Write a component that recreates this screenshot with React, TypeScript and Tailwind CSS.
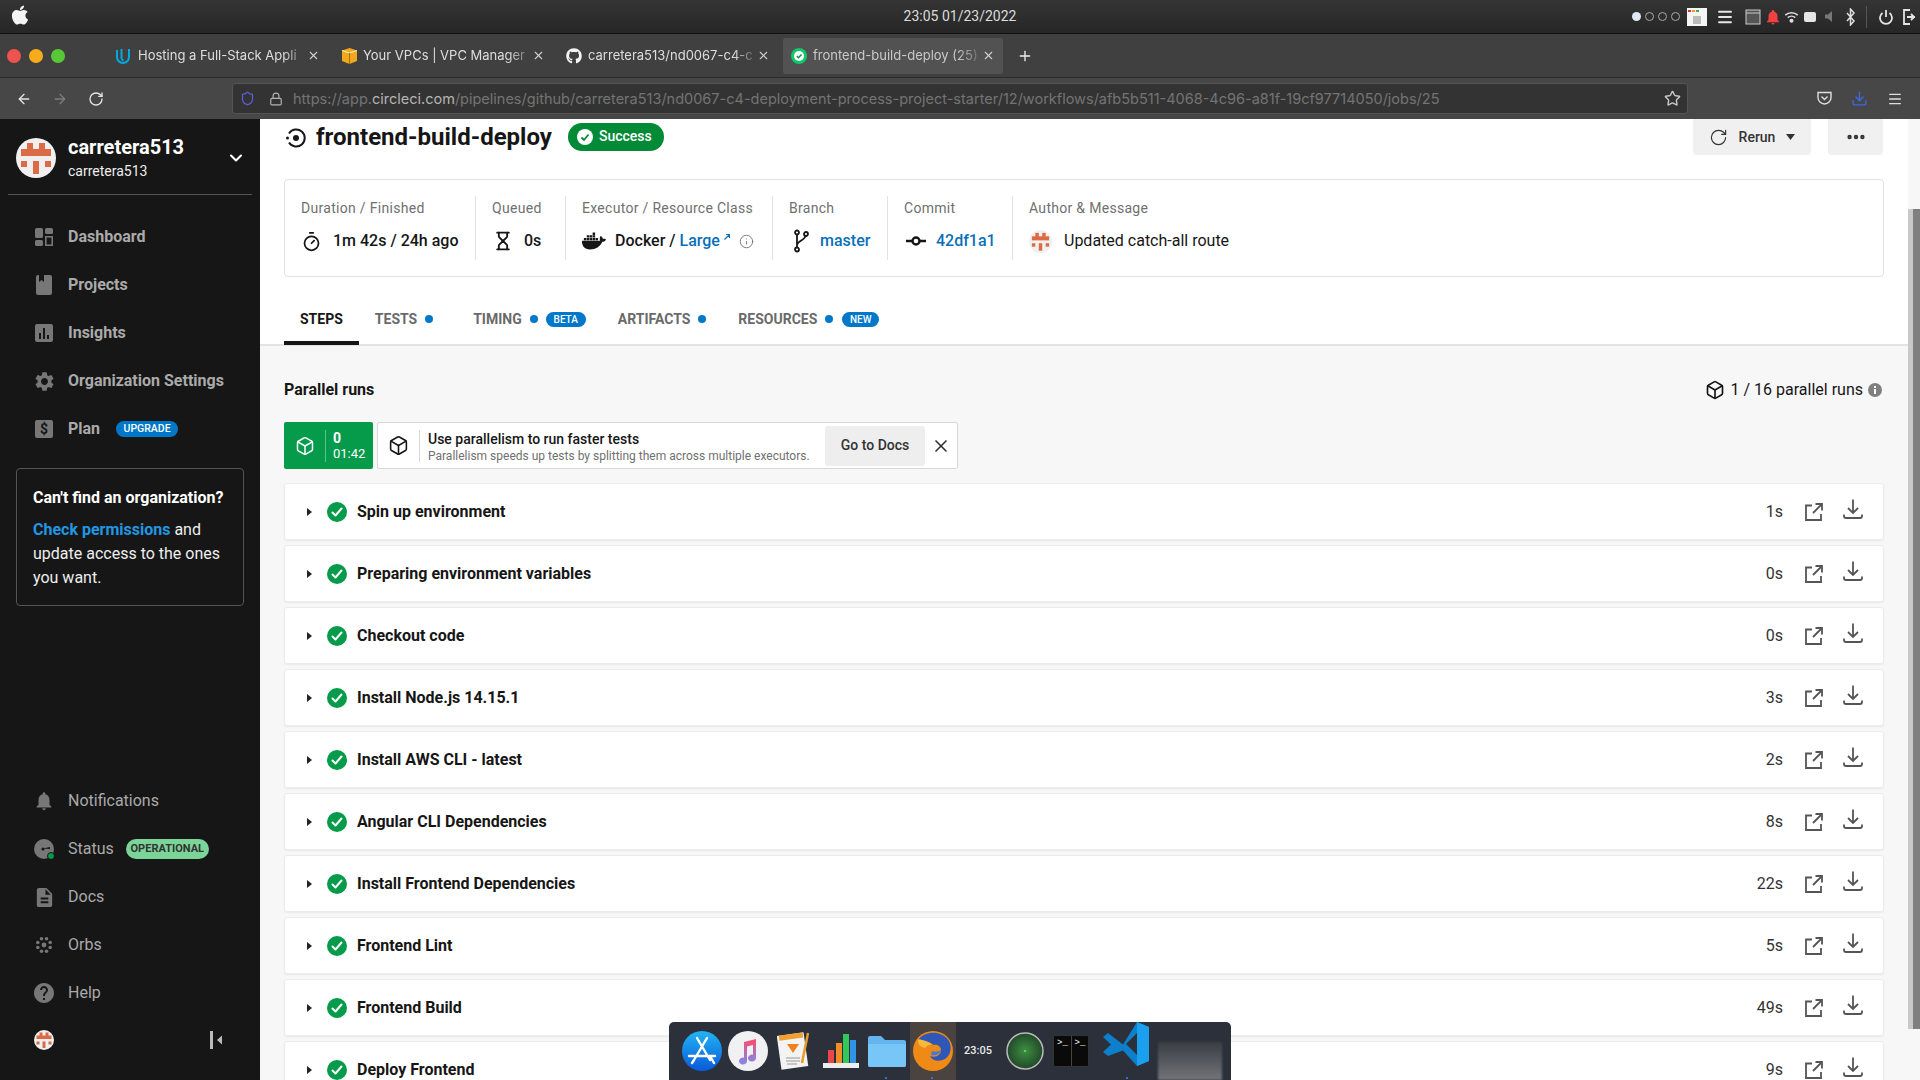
import { ArrowLeft, ArrowRight, Box, ChevronDown, Hourglass, Lock, Menu, Plus, RotateCw, Shield, Star, Timer, X, Info, EllipsisIcon, Download } from 'lucide-react';
import { FaApple, FaDocker, FaGithub } from 'react-icons/fa';
import { MdDescription, MdHelp, MdNotifications, MdSettings } from 'react-icons/md';

const steps = [
  ['Spin up environment', '1s'],
  ['Preparing environment variables', '0s'],
  ['Checkout code', '0s'],
  ['Install Node.js 14.15.1', '3s'],
  ['Install AWS CLI - latest', '2s'],
  ['Angular CLI Dependencies', '8s'],
  ['Install Frontend Dependencies', '22s'],
  ['Frontend Lint', '5s'],
  ['Frontend Build', '49s'],
  ['Deploy Frontend', '9s'],
];

function Identicon({ size }: { size: number }) {
  return (
    <svg width={size} height={size} viewBox="0 0 40 40" className="shrink-0">
      <circle cx="20" cy="20" r="20" fill="#f0f0f0" />
      <g fill="#dc6a45">
        <rect x="11" y="5" width="6" height="7" />
        <rect x="23" y="5" width="6" height="7" />
        <rect x="5" y="11" width="30" height="7" />
        <rect x="5" y="23" width="6" height="6" />
        <rect x="29" y="23" width="6" height="6" />
        <rect x="17" y="23" width="6" height="13" />
      </g>
    </svg>
  );
}

function CheckCircle({ size = 20 }: { size?: number }) {
  return (
    <svg width={size} height={size} viewBox="0 0 20 20" className="shrink-0">
      <circle cx="10" cy="10" r="10" fill="#069a4b" />
      <path d="M5.500 10.500l3 3 6-7" fill="none" stroke="#fff" strokeWidth="2" strokeLinecap="round" strokeLinejoin="round" />
    </svg>
  );
}

function ExternalIcon() {
  return (
    <svg width="18" height="18" viewBox="0 0 18 18" fill="none" stroke="#555" strokeWidth="1.800" className="shrink-0">
      <path d="M7 2.500H1v14.500h15v-6" />
      <path d="M8 10l8.500-8.500M10.500 1h6.500v6.500" />
    </svg>
  );
}

function SaveIcon() {
  return (
    <svg width="20" height="20" viewBox="0 0 20 20" fill="none" stroke="#555" strokeWidth="1.800" className="shrink-0">
      <path d="M10 0.500v13M5 9l5 5 5-5" />
      <path d="M1 15.500v1.500a2 2 0 0 0 2 2h14a2 2 0 0 0 2-2v-1.500" />
    </svg>
  );
}

function BrowserTab({ title, icon, active }: { title: string; icon: React.ReactNode; active?: boolean }) {
  return (
    <div className={`flex h-[36px] w-[220px] items-center gap-[6px] rounded-[3px] pl-[8px] pr-[8px] ${active ? 'bg-[#525252]' : ''}`}>
      <span className="flex w-[16px] shrink-0 justify-center">{icon}</span>
      <span className={`min-w-0 flex-1 overflow-hidden whitespace-nowrap text-[13px] [font-family:Inter,sans-serif] [mask-image:linear-gradient(to_right,black_88%,rgba(0,0,0,0.25))] ${active ? 'text-[#c9c9c9]' : 'text-[#dedede]'}`}>{title}</span>
      <X size={13} color="#d0d0d0" className="-ml-[2px] shrink-0" />
    </div>
  );
}

function BrowserChrome() {
  return (
    <div className="shrink-0">
      <div className="grid h-[34px] grid-cols-[1fr_auto_1fr] items-center border-b border-[#111] bg-gradient-to-b from-[#353535] to-[#262626]">
        <FaApple size={22} color="#f4f4f4" className="ml-[9px] mb-[3px]" />
        <span className="text-[14px] text-[#dcdcdc] [font-family:Roboto,sans-serif]">23:05 01/23/2022</span>
        <div className="flex items-center justify-end">
          <div className="flex items-center gap-[4px]">
            <span className="h-[9px] w-[9px] rounded-full bg-[#dfe9f3]" />
            <span className="h-[9px] w-[9px] rounded-full border border-[#aaa]" />
            <span className="h-[9px] w-[9px] rounded-full border border-[#aaa]" />
            <span className="h-[9px] w-[9px] rounded-full border border-[#aaa]" />
          </div>
          <svg width="20" height="18" viewBox="0 0 20 18" className="ml-[7px]">
            <rect width="20" height="18" fill="#f5f5f5" />
            <rect x="1" y="2" width="3" height="2" fill="#d33" />
            <rect x="5" y="2" width="3" height="2" fill="#e8a020" />
            <rect x="9" y="2" width="3" height="2" fill="#4a4" />
            <rect x="6" y="8" width="8" height="8" fill="#bbb" />
          </svg>
          <Menu size={18} color="#e6e6e6" strokeWidth={2.500} className="ml-[9px]" />
          <svg width="16" height="16" viewBox="0 0 16 16" className="ml-[11px]" fill="none" stroke="#ccc"><rect x="1" y="1" width="14" height="14" fill="#555" /><path d="M1 4h14" /></svg>
          <MdNotifications size={18} color="#f34040" className="ml-[3px]" />
          <svg width="15" height="14" viewBox="0 0 24 20" className="ml-[2px]" fill="none" stroke="#ddd" strokeWidth="2.500"><path d="M2 7a15 15 0 0 1 20 0M6 11a9 9 0 0 1 12 0" /><circle cx="12" cy="16" r="2" fill="#ddd" /></svg>
          <span className="ml-[5px] h-[10px] w-[12px] rounded-[2px] bg-[#e5e5e5]" />
          <svg width="13" height="13" viewBox="0 0 13 13" className="ml-[8px]"><path d="M1 4.500h3L8 1v11L4 8.500H1z" fill="#777" /></svg>
          <svg width="9" height="18" viewBox="0 0 9 18" className="ml-[9px]" fill="none" stroke="#ddd" strokeWidth="1.500"><path d="M1 5l7 8-3.500 4V1L8 5l-7 8" /></svg>
          <span className="ml-[11px] h-[22px] w-px bg-[#555]" />
          <svg width="14" height="16" viewBox="0 0 14 16" className="ml-[12px]" fill="none" stroke="#e5e5e5" strokeWidth="1.800"><path d="M7 1v7M3.500 4a6 6 0 1 0 7 0" /></svg>
          <svg width="12" height="16" viewBox="0 0 12 16" className="ml-[10px] mr-[5px]" fill="none" stroke="#e5e5e5" strokeWidth="1.800"><path d="M7 1H1v14h6M4 8h8M8 5l3 3-3 3" /></svg>
        </div>
      </div>
      <div className="flex h-[44px] items-center border-b border-[#2a2a2a] bg-[#404040]">
        <div className="flex w-[108px] items-center gap-[8px] pl-[7px]">
          <span className="h-[14px] w-[14px] rounded-full bg-[#ef5350]" />
          <span className="h-[14px] w-[14px] rounded-full bg-[#f5ab1b]" />
          <span className="h-[14px] w-[14px] rounded-full bg-[#58c936]" />
        </div>
        <div className="flex items-center gap-[5px]">
          <BrowserTab
            title="Hosting a Full-Stack Appli"
            icon={<svg width="16" height="16" viewBox="0 0 16 16" fill="none" stroke="#02a9e0" strokeWidth="2"><path d="M1 2v7a6 6 0 0 0 12 0V1M5.500 1v9a3 3 0 0 0 2 2.500" /></svg>}
          />
          <BrowserTab
            title="Your VPCs | VPC Manager"
            icon={<svg width="15" height="16" viewBox="0 0 15 16"><path d="M7.500 0L15 2.500V13l-7.500 3L0 13V2.500z" fill="#f2a81d" /><path d="M0 2.500L7.500 5 15 2.500" fill="none" stroke="#fff" strokeWidth=".8" /><path d="M7.500 5v11" stroke="#a86c05" /></svg>}
          />
          <BrowserTab title="carretera513/nd0067-c4-c" icon={<FaGithub size={16} color="#f5f5f5" />} />
          <BrowserTab
            active
            title="frontend-build-deploy (25)"
            icon={<svg width="16" height="16" viewBox="0 0 16 16"><circle cx="8" cy="8" r="8" fill="#12c76a" /><circle cx="8" cy="8" r="5" fill="#fff" /><path d="M5.800 8l1.700 1.700 3-3.200" fill="none" stroke="#0c8f4c" strokeWidth="1.500" /></svg>}
          />
        </div>
        <Plus size={16} color="#eee" className="ml-[14px]" />
      </div>
      <div className="flex h-[41px] items-center bg-[#474747]">
        <div className="flex w-[232px] shrink-0 items-center gap-[20px] pl-[16px]">
          <ArrowLeft size={16} color="#e4e4e4" />
          <ArrowRight size={16} color="#7d7d7d" />
          <RotateCw size={16} color="#e4e4e4" />
        </div>
        <div className="flex h-[31px] w-[1456px] items-center rounded-[3px] border border-[#555] bg-[#333333] pl-[7px] pr-[6px]">
          <Shield size={15} color="#5a5fd8" className="shrink-0" />
          <Lock size={14} color="#b4b4b4" className="ml-[14px] shrink-0" />
          <span className="ml-[10px] flex-1 whitespace-nowrap text-[14.500px] text-[#737373] [font-family:Inter,sans-serif]">
            https://app.<span className="text-[#b5b5b5]">circleci.com</span>/pipelines/github/carretera513/nd0067-c4-deployment-process-project-starter/12/workflows/afb5b511-4068-4c96-a81f-19cf97714050/jobs/25
          </span>
          <Star size={17} color="#c8c8c8" className="shrink-0" />
        </div>
        <svg width="15" height="15" viewBox="0 0 15 15" className="ml-[129px]" fill="none" stroke="#dedede" strokeWidth="1.400"><path d="M1 1.500h13v5a6.500 6.500 0 0 1-13 0z" /><path d="M4.500 5.500l3 3 3-3" /></svg>
        <Download size={17} color="#3d68e0" className="ml-[19px]" />
        <Menu size={16} color="#dedede" className="ml-[19px]" />
      </div>
    </div>
  );
}

function Sidebar() {
  const nav = [
    {
      label: 'Dashboard',
      icon: <svg width="18" height="18" viewBox="0 0 18 18" fill="#777"><rect width="8" height="10" rx="1.500" /><rect x="10" width="8" height="6" rx="1.500" /><rect y="12" width="8" height="6" rx="1.500" /><rect x="10.800" y="8.800" width="6.400" height="8.400" fill="none" stroke="#777" strokeWidth="1.600" /></svg>,
    },
    {
      label: 'Projects',
      icon: <svg width="16" height="20" viewBox="0 0 16 20"><path d="M2 0h12a2 2 0 0 1 2 2v16a2 2 0 0 1-2 2H2a2 2 0 0 1-2-2V2a2 2 0 0 1 2-2z" fill="#777" /><path d="M3 0h5v7L5.500 5 3 7z" fill="#161616" /></svg>,
    },
    {
      label: 'Insights',
      icon: <svg width="18" height="18" viewBox="0 0 18 18"><rect width="18" height="18" rx="2" fill="#777" /><path d="M4 9h2v6H4zM8 4h2v11H8zM12 11h2v4h-2z" fill="#161616" /></svg>,
    },
    { label: 'Organization Settings', icon: <MdSettings size={23} color="#777" /> },
    {
      label: 'Plan',
      icon: <svg width="18" height="18" viewBox="0 0 18 18"><rect width="18" height="18" rx="2" fill="#777" /><text x="9" y="14" textAnchor="middle" fontSize="14" fontWeight="700" fill="#161616" fontFamily="Roboto">$</text></svg>,
      badge: <span className="ml-[16px] flex h-[16px] w-[62px] items-center justify-center rounded-full bg-[#0078ca] text-[10.500px] font-medium text-white">UPGRADE</span>,
    },
  ];
  const lower = [
    { label: 'Notifications', icon: <MdNotifications size={22} color="#777" /> },
    {
      label: 'Status',
      icon: <svg width="20" height="20" viewBox="0 0 20 20"><circle cx="10" cy="10" r="10" fill="#777" /><path d="M9 9.500l7-1.500v2z" fill="#161616" /><circle cx="9" cy="10" r="1.600" fill="#161616" /><circle cx="17" cy="17" r="3.500" fill="#069a4b" stroke="#161616" /></svg>,
      badge: <span className="ml-[12px] flex h-[20px] w-[83px] items-center justify-center rounded-full bg-[#7bd598] text-[11px] font-bold text-[#333]">OPERATIONAL</span>,
    },
    { label: 'Docs', icon: <MdDescription size={23} color="#777" /> },
    {
      label: 'Orbs',
      icon: <svg width="16" height="16" viewBox="0 0 16 16" fill="#777"><circle cx="5.500" cy="1.800" r="1.800" /><circle cx="10.500" cy="1.800" r="1.800" /><circle cx="1.800" cy="5.500" r="1.800" /><circle cx="14.200" cy="5.500" r="1.800" /><circle cx="1.800" cy="10.500" r="1.800" /><circle cx="14.200" cy="10.500" r="1.800" /><circle cx="5.500" cy="14.200" r="1.800" /><circle cx="10.500" cy="14.200" r="1.800" /><circle cx="8" cy="8" r="2.400" /></svg>,
    },
    { label: 'Help', icon: <MdHelp size={24} color="#777" /> },
  ];
  return (
    <aside className="flex w-[260px] shrink-0 flex-col bg-[#161616] [font-family:Roboto,sans-serif]">
      <div className="mx-[8px] flex h-[76px] items-center border-b border-[#555] pt-[2px] pl-[8px]">
        <Identicon size={40} />
        <div className="ml-[12px] flex-1">
          <div className="text-[20px] leading-[24px] font-bold text-white">carretera513</div>
          <div className="mt-[3px] text-[14px] leading-[18px] text-[#eee]">carretera513</div>
        </div>
        <ChevronDown size={20} color="#fff" strokeWidth={2.500} className="mr-[6px]" />
      </div>
      <div className="mt-[18px]">
        {nav.map((item) => (
          <div key={item.label} className="flex h-[48px] items-center">
            <span className="flex w-[68px] shrink-0 justify-center pl-[24px] pr-[4px]">{item.icon}</span>
            <span className="text-[16px] font-bold text-[#aaaaaa]">{item.label}</span>
            {item.badge}
          </div>
        ))}
      </div>
      <div className="mx-[16px] mt-[15px] rounded-[4px] border border-[#555] px-[16px] pt-[17px] pb-[15px]">
        <div className="text-[16px] leading-[24px] font-bold text-white">Can't find an organization?</div>
        <div className="mt-[8px] text-[16px] leading-[24px] text-[#eeeeee]"><span className="font-bold text-[#2196e3]">Check permissions</span> and update access to the ones you want.</div>
      </div>
      <div className="mt-auto pb-[15px]">
        {lower.map((item) => (
          <div key={item.label} className="flex h-[48px] items-center">
            <span className="flex w-[68px] shrink-0 justify-center pl-[24px] pr-[4px]">{item.icon}</span>
            <span className="text-[16px] text-[#aaaaaa]">{item.label}</span>
            {item.badge}
          </div>
        ))}
        <div className="flex h-[48px] items-center justify-between pb-[2px] pl-[34px] pr-[38px]">
          <Identicon size={20} />
          <svg width="12" height="18" viewBox="0 0 12 18" fill="#bbb"><rect width="3" height="18" /><path d="M12 4.500v9L7 9z" /></svg>
        </div>
      </div>
    </aside>
  );
}

function InfoCol({ label, children, width }: { label: string; children: React.ReactNode; width?: string }) {
  return (
    <div className={`flex h-[64px] shrink-0 flex-col gap-[11px] pl-[16px] pt-[2px] ${width ? `${width} border-r border-[#e3e3e3]` : ''}`}>
      <div className="text-[14px] leading-[20px] tracking-[0.3px] whitespace-nowrap text-[#707070]">{label}</div>
      <div className="flex h-[24px] items-center text-[16px] whitespace-nowrap text-[#161616]">{children}</div>
    </div>
  );
}

function Dot({ className = 'ml-[8px]' }: { className?: string }) {
  return <span className={`h-[8px] w-[8px] rounded-full bg-[#0078ca] ${className}`} />;
}

function Tabs() {
  return (
    <div className="flex h-[68px] items-end text-[14px] font-bold text-[#6a6a6a]">
      <div className="flex h-[68px] items-center border-b-4 border-[#161616] px-[16px] pt-[20px] text-[#161616]">STEPS</div>
      <div className="flex h-[68px] items-center pt-[16px] pr-[24px] pl-[16px]">TESTS<Dot /></div>
      <div className="flex h-[68px] items-center pt-[16px] pr-[16px] pl-[16px]">TIMING<Dot /><span className="ml-[8px] flex h-[15px] w-[40px] items-center justify-center rounded-full bg-[#0078ca] text-[10px] font-medium text-white">BETA</span></div>
      <div className="flex h-[68px] items-center pt-[16px] pr-[16px] pl-[16px]">ARTIFACTS<Dot /></div>
      <div className="flex h-[68px] items-center pt-[16px] pl-[16px]">RESOURCES<Dot /><span className="ml-[9px] flex h-[15px] w-[37px] items-center justify-center rounded-full bg-[#0078ca] text-[10px] font-medium text-white">NEW</span></div>
    </div>
  );
}

function JobHeader() {
  return (
    <div className="h-[227px] shrink-0 border-b-2 border-[#e3e3e3] bg-white px-[24px]">
      <div className="flex h-[36px] items-center">
        <svg width="20" height="20" viewBox="0 0 20 20" fill="none" stroke="#161616" strokeWidth="2" className="ml-[2px] mt-[2px]">
          <path d="M3 5.500a8.500 8.500 0 1 1 0 9" />
          <circle cx="10" cy="10" r="3" fill="#161616" stroke="none" />
          <circle cx="1.500" cy="10" r="1.500" fill="#161616" stroke="none" />
        </svg>
        <h1 className="ml-[10px] text-[24px] leading-[36px] font-bold text-[#161616]">frontend-build-deploy</h1>
        <span className="ml-[16px] mt-[-1px] flex h-[28px] items-center gap-[6px] rounded-full bg-[#028a36] pr-[12px] pl-[9px] text-[14px] font-medium text-white">
          <svg width="16" height="16" viewBox="0 0 16 16"><circle cx="8" cy="8" r="8" fill="#fff" /><path d="M4.500 8.500l2.500 2.500 4.500-5.500" fill="none" stroke="#028a36" strokeWidth="1.800" /></svg>
          Success
        </span>
        <div className="mr-[1px] ml-auto flex h-[36px] items-center gap-[17px] self-start">
          <button className="flex h-[36px] w-[118px] items-center justify-center gap-[11px] rounded-b-[4px] bg-[#f0f0f0] text-[14px] font-medium text-[#333]">
            <RotateCw size={19} strokeWidth={1.500} color="#333" />
            Rerun
            <svg width="9" height="6" viewBox="0 0 9 6" fill="#333"><path d="M0 0h9L4.500 6z" /></svg>
          </button>
          <button className="flex h-[36px] w-[55px] items-center justify-center rounded-b-[4px] bg-[#f0f0f0]">
            <EllipsisIcon size={22} strokeWidth={2.800} color="#333" />
          </button>
        </div>
      </div>
      <div className="mt-[24px] flex h-[98px] items-center rounded-[4px] border border-[#e3e3e3] bg-white">
        <InfoCol label="Duration / Finished" width="w-[191px]">
          <Timer size={21} color="#161616" strokeWidth={2} className="mr-[11px]" />
          <span className="font-medium">1m 42s / 24h ago</span>
        </InfoCol>
        <InfoCol label="Queued" width="w-[90px]">
          <Hourglass size={20} color="#161616" strokeWidth={2.200} className="mr-[11px] ml-[1px]" />
          <span className="font-medium">0s</span>
        </InfoCol>
        <InfoCol label="Executor / Resource Class" width="w-[207px]">
          <FaDocker size={24} color="#161616" className="mr-[9px]" />
          <span className="font-medium">Docker / </span>
          <span className="ml-[4px] font-medium text-[#0b6fba]">Large</span>
          <svg width="6" height="6" viewBox="0 0 6 6" fill="none" stroke="#0b6fba" strokeWidth="1.200" className="mb-[8px] ml-[4px]"><path d="M0.500 5.500L5.500 0.500M2 0.500h3.500V4" /></svg>
          <Info size={15} color="#777" strokeWidth={1.500} className="ml-[9px]" />
        </InfoCol>
        <InfoCol label="Branch" width="w-[115px]">
          <svg width="16" height="24" viewBox="0 0 16 24" fill="none" stroke="#161616" strokeWidth="1.800" className="mr-[11px] ml-[4px]">
            <circle cx="4" cy="3.500" r="2" />
            <circle cx="13" cy="5" r="2" />
            <circle cx="4" cy="20.500" r="2" />
            <path d="M4 5.500v13M12.500 7c-.5 4-8 5-8.500 9" />
          </svg>
          <span className="font-medium text-[#0b6fba]">master</span>
        </InfoCol>
        <InfoCol label="Commit" width="w-[125px]">
          <svg width="20" height="10" viewBox="0 0 20 10" fill="none" stroke="#161616" strokeWidth="2.400" className="mr-[10px] ml-[2px]">
            <circle cx="10" cy="5" r="3.500" />
            <path d="M0 5h6M14 5h6" />
          </svg>
          <span className="font-medium text-[#0b6fba]">42df1a1</span>
        </InfoCol>
        <InfoCol label="Author & Message">
          <Identicon size={23} />
          <span className="ml-[12px]">Updated catch-all route</span>
        </InfoCol>
      </div>
      <Tabs />
    </div>
  );
}

function ParallelBar() {
  return (
    <div className="mt-[20px] flex h-[47px] shrink-0 gap-[4px]">
      <div className="flex w-[89px] items-center rounded-[2px] bg-[#069a4b] pl-[11px] text-white">
        <Box size={20} strokeWidth={1.800} />
        <span className="ml-[10px] h-[32px] w-px bg-[#5dc48e]" />
        <div className="ml-[7px] pt-[1px]">
          <div className="text-[14px] leading-[16px] font-bold">0</div>
          <div className="text-[13px] leading-[16px]">01:42</div>
        </div>
      </div>
      <div className="flex w-[581px] items-center rounded-[2px] border border-[#d8d8d8] bg-white pl-[10px]">
        <Box size={21} color="#161616" strokeWidth={1.800} />
        <span className="ml-[10px] h-[32px] w-px bg-[#d8d8d8]" />
        <div className="ml-[8px] flex-1 pt-[2px]">
          <div className="text-[14px] leading-[18px] font-medium text-[#161616]">Use parallelism to run faster tests</div>
          <div className="mt-[1px] text-[12px] leading-[15px] text-[#707070]">Parallelism speeds up tests by splitting them across multiple executors.</div>
        </div>
        <button className="flex h-[40px] w-[100px] items-center justify-center rounded-[3px] bg-[#eeeeee] text-[14px] font-medium text-[#333]">Go to Docs</button>
        <X size={20} color="#333" className="mx-[6px]" />
      </div>
    </div>
  );
}

function StepRow({ name, time }: { name: string; time: string }) {
  return (
    <div className="flex h-[57px] shrink-0 items-center rounded-[3px] border border-[#ececec] bg-white pr-[20px] pl-[22px] shadow-[0_1px_2px_rgba(0,0,0,0.06)]">
      <svg width="5" height="8" viewBox="0 0 5 8" fill="#222"><path d="M0 0l5 4-5 4z" /></svg>
      <span className="ml-[15px]"><CheckCircle /></span>
      <span className="ml-[10px] text-[16px] font-bold text-[#161616]">{name}</span>
      <span className="ml-auto text-[16px] text-[#333]">{time}</span>
      <span className="ml-[22px]"><ExternalIcon /></span>
      <span className="mb-[6px] ml-[20px]"><SaveIcon /></span>
    </div>
  );
}

function Dock() {
  return (
    <div className="absolute bottom-0 left-[669px] flex h-[58px] w-[562px] items-center rounded-t-[5px] bg-[#2b303b] pl-[13px]">
      <svg width="40" height="40" viewBox="0 0 40 40" className="shrink-0">
        <defs><linearGradient id="as" x1="0" y1="0" x2="0" y2="1"><stop offset="0" stopColor="#21b4f5" /><stop offset="1" stopColor="#0a5ad8" /></linearGradient></defs>
        <circle cx="20" cy="20" r="20" fill="url(#as)" />
        <path d="M15 7l13 22M25 7L12 29M7 25h26M28 25l4 7M10 32l2-3" fill="none" stroke="#fff" strokeWidth="2.400" strokeLinecap="round" />
      </svg>
      <svg width="40" height="40" viewBox="0 0 40 40" className="ml-[6px] shrink-0">
        <defs><linearGradient id="mu" x1="0" y1="0" x2="0" y2="1"><stop offset="0" stopColor="#fb4b6b" /><stop offset="1" stopColor="#7d8bf0" /></linearGradient></defs>
        <circle cx="20" cy="20" r="20" fill="#f1f1f3" />
        <path d="M16 11l12-3v19a4 3.500 0 1 1-3-3.300V14l-6 1.500V30a4 3.500 0 1 1-3-3.300z" fill="url(#mu)" />
      </svg>
      <svg width="34" height="40" viewBox="0 0 34 40" className="ml-[9px] shrink-0">
        <rect x="2" y="3" width="27" height="34" fill="#f3f3f3" transform="rotate(-8 16 20)" />
        <rect x="4" y="3" width="24" height="5" fill="#f0a030" transform="rotate(-8 16 20)" />
        <path d="M10 13h12l-6 9z" fill="#f08020" />
        <path d="M9 27h14M9 30h14M10 33h10" stroke="#999" />
        <path d="M31 2l-6 30" stroke="#e89a2a" strokeWidth="2.500" />
      </svg>
      <svg width="36" height="38" viewBox="0 0 36 38" className="ml-[12px] shrink-0">
        <path d="M0 31h36v5H0z" fill="#eee" />
        <rect x="5" y="18" width="6" height="13" fill="#e8474c" />
        <rect x="13" y="11" width="6" height="20" fill="#f28c28" />
        <rect x="20" y="2" width="6" height="29" fill="#34c759" />
        <rect x="27" y="8" width="6" height="23" fill="#2f93e8" />
      </svg>
      <svg width="38" height="32" viewBox="0 0 38 32" className="ml-[9px] shrink-0">
        <path d="M0 3a2 2 0 0 1 2-2h11l4 4h19a2 2 0 0 1 2 2v23a2 2 0 0 1-2 2H2a2 2 0 0 1-2-2z" fill="#64b5ef" />
        <path d="M0 9h38v21a2 2 0 0 1-2 2H2a2 2 0 0 1-2-2z" fill="#78c5f7" />
      </svg>
      <div className="ml-[4px] flex h-[58px] w-[46px] shrink-0 items-center justify-center bg-[#4a433f]">
        <svg width="40" height="40" viewBox="0 0 40 40">
          <circle cx="20" cy="20" r="20" fill="#f08a17" />
          <path d="M6 8C11 1 28-2 36 10c3 6 2 14-4 18-6 3-13 2-15-3 6 2 11-1 11-6 0-4-4-6-8-5-3-4-8-3-11-5-1 0-2-1-3-1z" fill="#2f57b8" />
          <path d="M18 24c5 1 9-1 10-5-3 2-6 2-9 1z" fill="#3f7ae0" />
          <path d="M5 9c0 5 3 7 7 8 2-3 5-4 8-3-5-3-10-6-15-5z" fill="#f6b93b" />
        </svg>
      </div>
      <span className="ml-[8px] w-[30px] shrink-0 text-[11px] font-medium text-[#e8e8e8] [font-family:Roboto,sans-serif]">23:05</span>
      <svg width="38" height="38" viewBox="0 0 38 38" className="ml-[12px] shrink-0">
        <defs><radialGradient id="rd"><stop offset="0" stopColor="#3d8f42" /><stop offset="1" stopColor="#22492a" /></radialGradient></defs>
        <circle cx="19" cy="19" r="18" fill="url(#rd)" stroke="#bbb" strokeWidth="1.500" />
        <circle cx="19" cy="19" r="1" fill="#5cf05c" />
      </svg>
      <div className="ml-[9px] flex h-[32px] w-[36px] shrink-0 rounded-[2px] border border-[#333] bg-[#0a0a0a] text-[9px] leading-[14px] font-medium text-white [font-family:Liberation_Mono,monospace]">
        <span className="flex-1 border-r border-[#444] pl-[3px]">&gt;_</span>
        <span className="flex-1 pl-[3px]">&gt;_</span>
      </div>
      <svg width="50" height="50" viewBox="0 0 100 100" className="mb-[14px] ml-[12px] shrink-0">
        <path d="M4 36L14 28l30 23L72 6l24 10v68L72 94 44 63 14 74 4 66l16-15z" fill="#0e7fcb" />
        <path d="M72 6l24 10v68L72 94z" fill="#1ba0f0" />
        <path d="M72 28L50 50l22 22z" fill="#2b303b" />
      </svg>
      <div className="mt-[20px] ml-[7px] h-[38px] w-[64px] shrink-0 bg-gradient-to-b from-[#3a3d44] to-[#73757a] blur-[1px]" />
      <span className="absolute bottom-[1px] left-[216px] h-[2px] w-[2px] rounded-full bg-[#4a78ff]" />
      <span className="absolute bottom-[1px] left-[262px] h-[2px] w-[2px] rounded-full bg-[#4a78ff]" />
      <span className="absolute bottom-[1px] left-[457px] h-[2px] w-[2px] rounded-full bg-[#4a78ff]" />
    </div>
  );
}

export default function App() {
  return (
    <div className="relative flex h-[1080px] w-[1920px] flex-col overflow-hidden bg-white [font-family:Roboto,sans-serif]">
      <BrowserChrome />
      <div className="flex min-h-0 flex-1">
        <Sidebar />
        <main className="flex min-w-0 flex-1 flex-col overflow-hidden bg-[#f7f7f7]">
          <JobHeader />
          <div className="flex min-h-0 flex-1 flex-col px-[24px] pt-[32px]">
            <div className="flex h-[24px] shrink-0 items-center justify-between">
              <span className="text-[16px] font-bold text-[#161616]">Parallel runs</span>
              <span className="flex items-center text-[16px] text-[#161616]">
                <Box size={20} color="#161616" strokeWidth={2} className="mr-[6px]" />
                1 / 16 parallel runs
                <svg width="14" height="14" viewBox="0 0 14 14" className="mr-[2px] ml-[5px]"><circle cx="7" cy="7" r="7" fill="#808080" /><rect x="6" y="6" width="2" height="5" fill="#fff" /><rect x="6" y="3" width="2" height="2" fill="#fff" /></svg>
              </span>
            </div>
            <ParallelBar />
            <div className="mt-[14px] flex shrink-0 flex-col gap-[5px]">
              {steps.map(([name, time]) => <StepRow key={name} name={name} time={time} />)}
            </div>
          </div>
        </main>
        <div className="flex w-[12px] shrink-0 bg-[#f7f7f7] pt-[90px]">
          <div className="h-[820px] w-full border-l-[5px] border-[#c9c9c9] bg-[#7f7f7f]" />
        </div>
      </div>
      <Dock />
    </div>
  );
}
